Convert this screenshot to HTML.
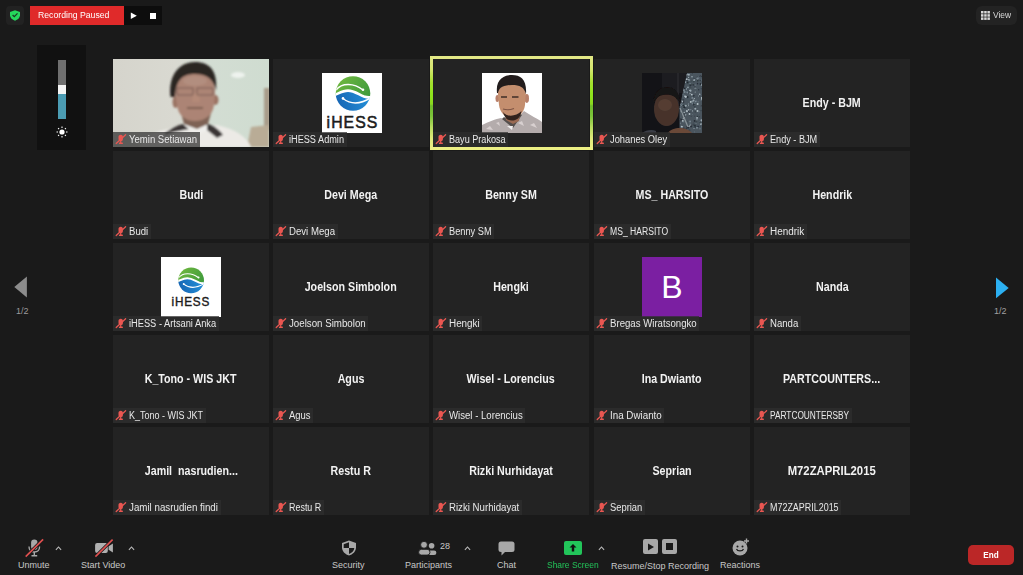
<!DOCTYPE html>
<html><head><meta charset="utf-8">
<style>
*{margin:0;padding:0;box-sizing:border-box}
html,body{width:1023px;height:575px;overflow:hidden;background:#1a1a1a;font-family:"Liberation Sans",sans-serif;color:#fff}
.abs{position:absolute}
.tile{position:absolute;width:156px;height:88px;background:#232323;overflow:hidden}
.vid{position:absolute;left:0;top:0}
.sq{position:absolute;left:48px;top:14px;width:60px;height:60px;overflow:hidden}
.bsq{background:#7b1fa2;}
.bsq span{position:absolute;left:0;top:0;width:60px;height:60px;line-height:60px;text-align:center;font-size:32px;color:#fff}
.cn{position:absolute;left:0;top:0;width:156px;height:88px;display:flex;align-items:center;justify-content:center}
.cn span{font-weight:bold;font-size:12px;white-space:nowrap;transform:scaleX(0.89);display:inline-block;color:#f2f2f2}
.lab{position:absolute;left:0;bottom:0;height:15px;font-size:10px;line-height:15px;background:rgba(46,46,46,0.73);white-space:nowrap}
.lab .mic{position:absolute;left:0;top:0}
.lt{position:absolute;left:16px;top:0;color:#e8e8e8;transform-origin:left center;transform:scaleX(0.95)}
.tb{position:absolute;font-size:9px;color:#c8c8c8;white-space:nowrap;text-align:center;margin-top:1px}
</style></head><body>
<!-- top bar -->
<div class="abs" style="left:6px;top:6px;width:18px;height:19px;background:#222;border-radius:4px"></div>
<svg class="abs" style="left:9px;top:9px" width="12" height="12" viewBox="0 0 12 12"><path d="M6 1.2 L11 2.9 L11 6.3 C11 9 8.6 10.9 6 11.7 C3.4 10.9 1 9 1 6.3 L1 2.9Z" fill="#25d85c"/><path d="M3.6 6 L5.3 7.6 L8.5 4.4" stroke="#1a3a22" stroke-width="1.3" fill="none"/></svg>
<div class="abs" style="left:30px;top:6px;width:94px;height:19px;background:#e02a2a"></div>
<div class="abs" style="left:38px;top:5px;height:19px;line-height:19px;font-size:9.6px;color:#fff;white-space:nowrap;transform-origin:left center;transform:scaleX(0.905)">Recording Paused</div>
<div class="abs" style="left:124px;top:6px;width:38px;height:19px;background:#0d0d0d"></div>
<svg class="abs" style="left:130px;top:12px" width="8" height="8" viewBox="0 0 8 8"><path d="M0.8 0.5 L6.8 3.7 L0.8 7Z" fill="#fff"/></svg>
<div class="abs" style="left:150px;top:13px;width:6px;height:6px;background:#fff"></div>

<div class="abs" style="left:976px;top:6px;width:41px;height:19px;background:#232323;border-radius:6px"></div>
<svg class="abs" style="left:981px;top:11px" width="9" height="9" viewBox="0 0 9 9" fill="#d8d8d8"><rect x="0" y="0" width="2.5" height="2.5"/><rect x="3.2" y="0" width="2.5" height="2.5"/><rect x="6.4" y="0" width="2.5" height="2.5"/><rect x="0" y="3.2" width="2.5" height="2.5"/><rect x="3.2" y="3.2" width="2.5" height="2.5"/><rect x="6.4" y="3.2" width="2.5" height="2.5"/><rect x="0" y="6.4" width="2.5" height="2.5"/><rect x="3.2" y="6.4" width="2.5" height="2.5"/><rect x="6.4" y="6.4" width="2.5" height="2.5"/></svg>
<div class="abs" style="left:993px;top:5px;line-height:19px;font-size:9.6px;color:#d8d8d8;transform-origin:left center;transform:scaleX(0.88)">View</div>

<!-- left volume panel -->
<div class="abs" style="left:37px;top:45px;width:49px;height:105px;background:#111"></div>
<div class="abs" style="left:58px;top:60px;width:8px;height:25px;background:#707070"></div>
<div class="abs" style="left:58px;top:85px;width:8px;height:9px;background:#f5f5f5"></div>
<div class="abs" style="left:58px;top:94px;width:8px;height:25px;background:#4b9cb3"></div>
<svg class="abs" style="left:56px;top:126px" width="12" height="12" viewBox="0 0 12 12"><circle cx="6" cy="6" r="2.6" fill="#fff"/><g stroke="#fff" stroke-width="1.1"><path d="M6 0.5V2M6 10V11.5M0.5 6H2M10 6H11.5M2.1 2.1L3.1 3.1M8.9 8.9L9.9 9.9M2.1 9.9L3.1 8.9M8.9 3.1L9.9 2.1"/></g></svg>

<!-- arrows -->
<svg class="abs" style="left:14px;top:276px" width="13" height="22" viewBox="0 0 13 22"><path d="M0.3 11 L12.9 0.5 L12.9 21.6Z" fill="#8c8c8c"/></svg>
<div class="abs" style="left:16px;top:306px;font-size:9px;color:#9a9a9a">1/2</div>
<svg class="abs" style="left:996px;top:277px" width="13" height="22" viewBox="0 0 13 22"><path d="M0 0.4 L12.7 10.9 L0 21.3Z" fill="#2cb0f2"/></svg>
<div class="abs" style="left:994px;top:306px;font-size:9px;color:#a0a0a0">1/2</div>

<!-- highlight border -->
<div class="abs" style="left:430px;top:56px;width:163px;height:3px;background:#e2e886"></div>
<div class="abs" style="left:430px;top:147px;width:163px;height:3px;background:#ecef84"></div>
<div class="abs" style="left:430px;top:56px;width:3px;height:94px;background:linear-gradient(#e2e886 0%,#d4e66e 14%,#a6e030 28%,#8fe41c 40%,#8ad81e 51%,#6fbb2c 53%,#7cc43a 64%,#b8dc60 76%,#e0ea7c 88%,#ecef84 100%)"></div>
<div class="abs" style="left:590px;top:56px;width:3px;height:94px;background:linear-gradient(#e2e886 0%,#d4e66e 14%,#a6e030 28%,#8fe41c 40%,#8ad81e 51%,#6fbb2c 53%,#7cc43a 64%,#b8dc60 76%,#e0ea7c 88%,#ecef84 100%)"></div>

<div class="tile" style="left:113px;top:59px"><svg class="vid" width="156" height="88" viewBox="0 0 156 88">
<defs>
<linearGradient id="vbg" x1="0" y1="0" x2="1" y2="0">
<stop offset="0" stop-color="#d5d4cc"/><stop offset="0.4" stop-color="#d9d9d1"/><stop offset="0.62" stop-color="#d3ddd3"/><stop offset="1" stop-color="#cfdcd0"/>
</linearGradient>
<filter id="vbl" x="-10%" y="-10%" width="120%" height="120%"><feGaussianBlur stdDeviation="1.1"/></filter>
</defs>
<rect width="156" height="88" fill="url(#vbg)"/>
<g filter="url(#vbl)">
<rect x="151" y="29" width="6" height="42" fill="#a89c8a"/>
<path d="M134 88 L138 68 L156 66 L156 88Z" fill="#b9ac96"/>
<ellipse cx="125" cy="16" rx="7" ry="3" fill="#eef3ee"/>
<path d="M26 88 C30 78 42 72 56 70 L104 66 C122 70 134 78 138 88Z" fill="#eceae6"/>
<path d="M52 74 C58 70 64 66 70 65 L76 70 L66 72 C60 73 56 74 52 76Z" fill="#3a3636"/><path d="M94 65 C100 66 106 70 110 76 L104 79 L94 71Z" fill="#3a3636"/><path d="M70 65 L84 70 L94 65 L94 71 L84 76 L76 70Z" fill="#f0efec"/>
<path d="M68 54 L98 54 L95 65 L84 70 L71 65Z" fill="#7e6254"/>
<ellipse cx="62.5" cy="43" rx="3" ry="6" fill="#9a7262"/>
<ellipse cx="102.5" cy="41" rx="3" ry="5" fill="#9a7262"/>
<path d="M62 34 C62 20 70 13 82 13 C95 13 102 20 102 34 L101 46 C100 56 92 62 82 62 C72 62 65 56 64 46Z" fill="#ac8474"/>
<path d="M80 34 L86 34 L87 43 L79 43Z" fill="#b48a78"/>
<path d="M57.5 38 C55 14 68 3 82 3 C97 3 105 12 103 32 C101 22 96 15 82 15 C70 15 63 20 62 38Z" fill="#2a2524"/><ellipse cx="82" cy="22" rx="12" ry="5" fill="#b8978a" opacity="0.5"/>
<path d="M64 29 H80 V36 H64Z M84 29 H100 V36 H84Z" fill="none" stroke="#5a4844" stroke-width="1" opacity="0.6"/>
<path d="M74 49 H90" stroke="#6e5046" stroke-width="1.5"/>
</g>
</svg>
<div class="lab" style="width:86.6px"><svg class="mic" width="16" height="15" viewBox="0 0 16 15"><g fill="#ea5752"><path d="M7.7 2.8 C9.2 2.8 9.9 3.8 9.9 5 L9.9 7.3 C9.9 8.6 8.9 9.3 7.7 9.3 C6.5 9.3 5.5 8.6 5.5 7.3 L5.5 5 C5.5 3.8 6.2 2.8 7.7 2.8Z"/><rect x="7.1" y="9" width="1.2" height="2"/><rect x="5.9" y="10.6" width="4" height="1.5" rx="0.6"/></g><path d="M3.2 11.5 L12.6 2.7" stroke="#ea5752" stroke-width="1.25" stroke-linecap="round"/></svg><span class="lt" style="transform:scaleX(0.955)">Yemin Setiawan</span></div></div>
<div class="tile" style="left:273px;top:59px"><div class="sq" style="left:49px"><svg width="60" height="60" viewBox="0 0 60 60">
<defs>
<linearGradient id="lg1" x1="0" y1="0" x2="1" y2="0.3"><stop offset="0" stop-color="#86c440"/><stop offset="1" stop-color="#3d9a3c"/></linearGradient>
<linearGradient id="lg2" x1="0" y1="0" x2="1" y2="-0.2"><stop offset="0" stop-color="#1258a8"/><stop offset="1" stop-color="#2aa4ea"/></linearGradient>
<clipPath id="lc"><circle cx="31" cy="20.5" r="17.3"/></clipPath>
</defs>
<rect width="60" height="60" fill="#fff"/>
<g clip-path="url(#lc)">
<path d="M0 0 H60 V22 C54 23 48 25 42 23 C36 21 32 18.5 26 18.5 C20 18.5 17 21 13 22.5 L0 24Z" fill="url(#lg1)"/>
<path d="M0 24 L13 22.5 C17 21 20 18.5 26 18.5 C32 18.5 36 21 42 23 C48 25 54 23 60 22 V60 H0Z" fill="url(#lg2)"/>
<path d="M10 23 C16 21 20 17.6 26 17.6 C32 17.6 36 21 42 23.5 C46 25 50 24.5 54 23" stroke="#fff" stroke-width="2.6" fill="none"/>
<path d="M14 17 C20 9.5 32 10 41 17" stroke="#fff" stroke-width="1.4" fill="none"/>
<path d="M21 25.5 C28 31 38 32 50 24" stroke="#fff" stroke-width="1.4" fill="none"/>
</g>
<circle cx="41" cy="16.8" r="1.3" fill="#fff"/>
<circle cx="21" cy="25.4" r="1.3" fill="#fff"/>
<text x="4.6" y="54.6" font-family="Liberation Sans" font-size="16.4" fill="#1c1c1c" stroke="#1c1c1c" stroke-width="0.55" letter-spacing="1.1" textLength="51.8" lengthAdjust="spacingAndGlyphs">iHESS</text>
</svg>
</div><div class="lab" style="width:73.5px"><svg class="mic" width="16" height="15" viewBox="0 0 16 15"><g fill="#ea5752"><path d="M7.7 2.8 C9.2 2.8 9.9 3.8 9.9 5 L9.9 7.3 C9.9 8.6 8.9 9.3 7.7 9.3 C6.5 9.3 5.5 8.6 5.5 7.3 L5.5 5 C5.5 3.8 6.2 2.8 7.7 2.8Z"/><rect x="7.1" y="9" width="1.2" height="2"/><rect x="5.9" y="10.6" width="4" height="1.5" rx="0.6"/></g><path d="M3.2 11.5 L12.6 2.7" stroke="#ea5752" stroke-width="1.25" stroke-linecap="round"/></svg><span class="lt" style="transform:scaleX(0.916)">iHESS Admin</span></div></div>
<div class="tile" style="left:433px;top:59px"><div class="sq" style="left:49px"><svg width="60" height="60" viewBox="0 0 60 60">
<defs><filter id="bbl" x="-5%" y="-5%" width="110%" height="110%"><feGaussianBlur stdDeviation="0.7"/></filter></defs>
<rect width="60" height="60" fill="#fff"/>
<g filter="url(#bbl)">
<path d="M0 60 L0 52 C6 49 14 46 19 45 L24 47 L36 44 L42 38 C48 42 56 46 60 49 L60 60Z" fill="#b4acac"/>
<path d="M4 56 L8 53 L11 57Z M48 52 L52 50 L55 55Z M36 50 L40 48 L42 53Z M14 50 L17 49 L18 53Z" fill="#d8d0d0"/>
<path d="M20 46 L31 55 L40 42 L38 41 L31 50 L22 44Z" fill="#55504e"/>
<path d="M25 53 L30 57 L31 53Z" fill="#f0eeee"/>
<path d="M23 40 L38 40 L37 48 L31 51 L24 47Z" fill="#9a6a52"/>
<ellipse cx="15.3" cy="25.5" rx="1.8" ry="3.6" fill="#b8806a"/>
<ellipse cx="44.8" cy="25.5" rx="2.2" ry="4.4" fill="#b8806a"/>
<path d="M15.8 20 C15.8 13 22 11.5 30 11.5 C38 11.5 43.8 13 43.8 21 L43 32 C42 40 36 45.5 30 45.5 C24 45.5 18 40 17 32Z" fill="#c48e6e"/>
<path d="M15 20 C13.5 7 21 2 30 2 C39 2 45 7 44 21 C42 14 38 12 30 12 C22 12 17 14 16 20Z" fill="#221e1e"/>
<path d="M19 24 H25 M30 24 H36.5" stroke="#3e2e28" stroke-width="1.5"/>
<path d="M21 36 C24 37 28 37 32 35.5" stroke="#7e5444" stroke-width="1.2" fill="none"/>
<path d="M21 39 C24 44 34 44 39.5 38 C38.5 45 34.5 47.5 30 47.5 C25.5 47.5 22.5 45 21 39Z" fill="#30241f"/>
</g>
</svg>
</div><div class="lab" style="width:75.1px"><svg class="mic" width="16" height="15" viewBox="0 0 16 15"><g fill="#ea5752"><path d="M7.7 2.8 C9.2 2.8 9.9 3.8 9.9 5 L9.9 7.3 C9.9 8.6 8.9 9.3 7.7 9.3 C6.5 9.3 5.5 8.6 5.5 7.3 L5.5 5 C5.5 3.8 6.2 2.8 7.7 2.8Z"/><rect x="7.1" y="9" width="1.2" height="2"/><rect x="5.9" y="10.6" width="4" height="1.5" rx="0.6"/></g><path d="M3.2 11.5 L12.6 2.7" stroke="#ea5752" stroke-width="1.25" stroke-linecap="round"/></svg><span class="lt" style="transform:scaleX(0.909)">Bayu Prakosa</span></div></div>
<div class="tile" style="left:594px;top:59px"><div class="sq" style="left:48px"><svg width="60" height="60" viewBox="0 0 60 60">
<defs><filter id="jbl" x="-5%" y="-5%" width="110%" height="110%"><feGaussianBlur stdDeviation="0.5"/></filter>
<clipPath id="jcl"><path d="M45 0 L60 0 L60 60 L37.5 60 L37.5 35Z"/></clipPath></defs>
<rect width="60" height="60" fill="#131317"/>
<rect x="20" y="0" width="24" height="20" fill="#1c1c20"/>
<path d="M45 0 L60 0 L60 60 L37.5 60 L37.5 35Z" fill="#4a555e"/>
<g filter="url(#jbl)">
<g clip-path="url(#jcl)"><circle cx="43.8" cy="9.1" r="0.9" fill="#9aa8b0"/>
<circle cx="55.7" cy="5.6" r="0.8" fill="#b4c0c6"/>
<circle cx="46.0" cy="14.4" r="0.8" fill="#9aa8b0"/>
<circle cx="55.8" cy="7.4" r="0.6" fill="#222a32"/>
<circle cx="50.0" cy="3.7" r="0.8" fill="#9aa8b0"/>
<circle cx="59.4" cy="2.8" r="1.0" fill="#2a323a"/>
<circle cx="46.1" cy="32.4" r="0.8" fill="#b4c0c6"/>
<circle cx="55.6" cy="10.8" r="0.8" fill="#222a32"/>
<circle cx="53.1" cy="33.9" r="0.8" fill="#3a444c"/>
<circle cx="52.3" cy="25.7" r="0.6" fill="#b4c0c6"/>
<circle cx="58.2" cy="21.7" r="0.6" fill="#7a8892"/>
<circle cx="52.8" cy="14.6" r="0.8" fill="#b4c0c6"/>
<circle cx="47.9" cy="20.6" r="0.7" fill="#b4c0c6"/>
<circle cx="59.5" cy="7.1" r="0.7" fill="#5a6872"/>
<circle cx="44.2" cy="56.0" r="0.7" fill="#222a32"/>
<circle cx="37.9" cy="33.5" r="1.0" fill="#5a6872"/>
<circle cx="43.5" cy="41.7" r="0.8" fill="#b4c0c6"/>
<circle cx="55.1" cy="4.1" r="0.5" fill="#2a323a"/>
<circle cx="47.4" cy="39.8" r="0.4" fill="#222a32"/>
<circle cx="43.4" cy="34.7" r="0.9" fill="#3a444c"/>
<circle cx="42.8" cy="23.1" r="0.9" fill="#9aa8b0"/>
<circle cx="58.6" cy="21.3" r="0.8" fill="#3a444c"/>
<circle cx="45.4" cy="52.3" r="0.5" fill="#3a444c"/>
<circle cx="45.6" cy="16.7" r="0.5" fill="#3a444c"/>
<circle cx="56.7" cy="16.7" r="0.7" fill="#2a323a"/>
<circle cx="52.4" cy="22.8" r="0.6" fill="#9aa8b0"/>
<circle cx="41.6" cy="29.1" r="0.8" fill="#2a323a"/>
<circle cx="48.8" cy="36.6" r="0.6" fill="#7a8892"/>
<circle cx="52.6" cy="30.9" r="0.8" fill="#222a32"/>
<circle cx="53.8" cy="27.4" r="1.0" fill="#5a6872"/>
<circle cx="52.3" cy="33.6" r="0.7" fill="#3a444c"/>
<circle cx="38.5" cy="38.1" r="0.4" fill="#9aa8b0"/>
<circle cx="59.6" cy="26.4" r="0.5" fill="#b4c0c6"/>
<circle cx="44.7" cy="1.5" r="1.0" fill="#b4c0c6"/>
<circle cx="45.0" cy="38.1" r="1.1" fill="#b4c0c6"/>
<circle cx="44.7" cy="7.4" r="1.0" fill="#3a444c"/>
<circle cx="47.5" cy="18.7" r="0.5" fill="#222a32"/>
<circle cx="44.2" cy="15.9" r="1.0" fill="#7a8892"/>
<circle cx="48.4" cy="12.3" r="1.1" fill="#2a323a"/>
<circle cx="39.5" cy="32.6" r="0.4" fill="#b4c0c6"/>
<circle cx="43.2" cy="38.6" r="0.5" fill="#5a6872"/>
<circle cx="42.3" cy="22.0" r="0.5" fill="#5a6872"/>
<circle cx="41.3" cy="32.5" r="0.8" fill="#222a32"/>
<circle cx="41.4" cy="48.7" r="1.1" fill="#5a6872"/>
<circle cx="45.6" cy="48.2" r="0.5" fill="#3a444c"/>
<circle cx="42.2" cy="41.6" r="1.1" fill="#3a444c"/>
<circle cx="55.4" cy="43.4" r="0.6" fill="#2a323a"/>
<circle cx="47.3" cy="20.3" r="0.7" fill="#b4c0c6"/>
<circle cx="56.2" cy="28.8" r="0.9" fill="#5a6872"/>
<circle cx="51.4" cy="50.1" r="0.5" fill="#3a444c"/>
<circle cx="54.8" cy="45.0" r="0.7" fill="#7a8892"/>
<circle cx="46.4" cy="38.2" r="0.5" fill="#222a32"/>
<circle cx="45.5" cy="24.1" r="1.1" fill="#222a32"/>
<circle cx="39.8" cy="59.6" r="0.4" fill="#b4c0c6"/>
<circle cx="57.7" cy="48.4" r="0.5" fill="#5a6872"/>
<circle cx="50.3" cy="28.5" r="1.1" fill="#7a8892"/>
<circle cx="49.2" cy="7.9" r="0.4" fill="#222a32"/>
<circle cx="51.6" cy="31.6" r="1.1" fill="#3a444c"/>
<circle cx="59.7" cy="11.7" r="1.0" fill="#9aa8b0"/>
<circle cx="42.0" cy="17.6" r="0.6" fill="#b4c0c6"/>
<circle cx="43.8" cy="32.7" r="1.0" fill="#9aa8b0"/>
<circle cx="57.8" cy="21.2" r="0.7" fill="#b4c0c6"/>
<circle cx="55.6" cy="31.0" r="1.0" fill="#b4c0c6"/>
<circle cx="48.3" cy="52.4" r="0.9" fill="#b4c0c6"/>
<circle cx="40.1" cy="28.4" r="0.9" fill="#b4c0c6"/>
<circle cx="48.7" cy="28.9" r="0.9" fill="#b4c0c6"/>
<circle cx="46.9" cy="1.7" r="1.0" fill="#9aa8b0"/>
<circle cx="46.6" cy="36.8" r="0.8" fill="#b4c0c6"/>
<circle cx="48.2" cy="48.4" r="0.8" fill="#7a8892"/>
<circle cx="52.8" cy="52.6" r="1.1" fill="#2a323a"/>
<circle cx="58.1" cy="53.6" r="0.5" fill="#3a444c"/>
<circle cx="46.6" cy="4.4" r="0.6" fill="#9aa8b0"/>
<circle cx="38.9" cy="46.6" r="1.1" fill="#222a32"/>
<circle cx="51.8" cy="8.6" r="1.0" fill="#3a444c"/>
<circle cx="41.3" cy="57.2" r="0.7" fill="#3a444c"/>
<circle cx="39.9" cy="40.1" r="0.6" fill="#222a32"/>
<circle cx="46.4" cy="30.9" r="0.6" fill="#7a8892"/>
<circle cx="44.6" cy="5.5" r="0.7" fill="#2a323a"/>
<circle cx="49.3" cy="26.4" r="0.4" fill="#2a323a"/>
<circle cx="48.4" cy="17.7" r="1.1" fill="#9aa8b0"/>
<circle cx="59.6" cy="47.3" r="1.1" fill="#9aa8b0"/>
<circle cx="57.7" cy="10.9" r="0.9" fill="#5a6872"/>
<circle cx="46.1" cy="54.7" r="1.0" fill="#2a323a"/>
<circle cx="45.7" cy="32.2" r="0.8" fill="#3a444c"/>
<circle cx="52.8" cy="5.4" r="0.4" fill="#222a32"/>
<circle cx="40.4" cy="53.7" r="0.6" fill="#9aa8b0"/>
<circle cx="51.2" cy="48.1" r="0.5" fill="#5a6872"/>
<circle cx="59.9" cy="25.1" r="1.0" fill="#b4c0c6"/>
<circle cx="39.1" cy="31.6" r="0.6" fill="#9aa8b0"/>
<circle cx="59.3" cy="15.7" r="0.5" fill="#2a323a"/>
<circle cx="51.1" cy="31.9" r="0.5" fill="#3a444c"/>
<circle cx="48.0" cy="10.7" r="0.6" fill="#9aa8b0"/>
<circle cx="59.9" cy="2.2" r="0.4" fill="#b4c0c6"/>
<circle cx="49.2" cy="11.4" r="0.7" fill="#3a444c"/>
<circle cx="38.6" cy="49.1" r="0.7" fill="#3a444c"/>
<circle cx="49.1" cy="53.3" r="1.1" fill="#2a323a"/>
<circle cx="52.5" cy="58.9" r="0.6" fill="#5a6872"/>
<circle cx="57.2" cy="43.7" r="0.5" fill="#2a323a"/>
<circle cx="59.6" cy="50.2" r="0.4" fill="#222a32"/>
<circle cx="53.8" cy="15.3" r="0.5" fill="#9aa8b0"/>
<circle cx="52.0" cy="22.9" r="0.8" fill="#2a323a"/>
<circle cx="50.4" cy="41.6" r="0.4" fill="#7a8892"/>
<circle cx="39.8" cy="26.7" r="0.6" fill="#2a323a"/>
<circle cx="59.3" cy="32.8" r="0.6" fill="#2a323a"/>
<circle cx="44.0" cy="5.0" r="0.6" fill="#222a32"/>
<circle cx="40.8" cy="30.3" r="0.4" fill="#2a323a"/>
<circle cx="55.6" cy="8.6" r="0.8" fill="#3a444c"/>
<circle cx="41.6" cy="35.1" r="0.8" fill="#5a6872"/>
<circle cx="39.7" cy="53.6" r="0.9" fill="#b4c0c6"/>
<circle cx="45.3" cy="19.6" r="1.1" fill="#7a8892"/>
<circle cx="42.8" cy="37.1" r="0.5" fill="#5a6872"/>
<circle cx="56.0" cy="53.5" r="0.8" fill="#222a32"/>
<circle cx="52.8" cy="30.3" r="1.0" fill="#5a6872"/>
<circle cx="48.1" cy="50.1" r="1.0" fill="#5a6872"/>
<circle cx="52.5" cy="47.9" r="0.9" fill="#222a32"/>
<circle cx="51.4" cy="5.1" r="0.4" fill="#222a32"/>
<circle cx="44.7" cy="6.3" r="1.0" fill="#b4c0c6"/>
<circle cx="48.8" cy="14.7" r="0.6" fill="#3a444c"/>
<circle cx="55.1" cy="44.9" r="0.8" fill="#b4c0c6"/>
<circle cx="53.9" cy="28.4" r="1.0" fill="#5a6872"/>
<circle cx="42.4" cy="43.8" r="0.5" fill="#222a32"/>
<circle cx="51.6" cy="27.6" r="1.0" fill="#9aa8b0"/>
<circle cx="47.5" cy="41.0" r="0.9" fill="#b4c0c6"/>
<circle cx="51.2" cy="11.9" r="0.8" fill="#2a323a"/>
<circle cx="42.1" cy="44.6" r="0.6" fill="#b4c0c6"/>
<circle cx="39.2" cy="28.9" r="0.7" fill="#222a32"/>
<circle cx="47.8" cy="42.5" r="0.6" fill="#3a444c"/>
<circle cx="47.2" cy="7.1" r="1.0" fill="#7a8892"/>
<circle cx="47.4" cy="17.4" r="0.5" fill="#b4c0c6"/>
<circle cx="59.2" cy="27.0" r="0.6" fill="#7a8892"/>
<circle cx="58.0" cy="55.8" r="0.5" fill="#9aa8b0"/>
<circle cx="39.4" cy="31.4" r="1.1" fill="#7a8892"/>
<circle cx="50.5" cy="37.9" r="0.6" fill="#9aa8b0"/>
<circle cx="52.9" cy="13.9" r="1.0" fill="#3a444c"/>
<circle cx="45.5" cy="9.5" r="1.1" fill="#222a32"/>
<circle cx="46.8" cy="18.1" r="0.5" fill="#2a323a"/>
<circle cx="45.0" cy="7.3" r="0.6" fill="#2a323a"/>
<circle cx="54.0" cy="50.3" r="0.5" fill="#7a8892"/>
<circle cx="53.1" cy="54.1" r="0.6" fill="#2a323a"/>
<circle cx="56.9" cy="4.6" r="1.0" fill="#5a6872"/>
<circle cx="38.4" cy="50.1" r="0.6" fill="#7a8892"/>
<circle cx="42.0" cy="15.9" r="0.8" fill="#7a8892"/>
<circle cx="54.6" cy="47.1" r="0.7" fill="#9aa8b0"/>
<circle cx="55.5" cy="37.9" r="1.0" fill="#b4c0c6"/>
<circle cx="49.2" cy="43.2" r="0.4" fill="#222a32"/>
<circle cx="45.9" cy="36.9" r="0.5" fill="#5a6872"/>
<circle cx="58.2" cy="7.6" r="0.7" fill="#2a323a"/>
<circle cx="42.8" cy="15.3" r="0.9" fill="#222a32"/>
<circle cx="42.2" cy="39.4" r="0.6" fill="#b4c0c6"/>
<circle cx="52.1" cy="7.2" r="0.9" fill="#9aa8b0"/>
<circle cx="41.0" cy="54.4" r="0.7" fill="#7a8892"/>
<circle cx="46.9" cy="20.0" r="0.9" fill="#3a444c"/>
<circle cx="42.2" cy="34.2" r="1.0" fill="#222a32"/>
<circle cx="56.9" cy="23.0" r="0.9" fill="#7a8892"/>
<circle cx="45.0" cy="20.3" r="0.4" fill="#2a323a"/>
<circle cx="49.8" cy="21.6" r="0.9" fill="#b4c0c6"/>
<circle cx="51.1" cy="51.8" r="0.6" fill="#2a323a"/>
<circle cx="57.5" cy="23.1" r="0.9" fill="#3a444c"/>
<circle cx="58.9" cy="50.9" r="1.0" fill="#9aa8b0"/>
<circle cx="54.3" cy="48.3" r="1.1" fill="#3a444c"/>
<circle cx="58.2" cy="49.5" r="1.0" fill="#3a444c"/>
<circle cx="39.7" cy="31.3" r="0.9" fill="#5a6872"/>
<circle cx="53.3" cy="38.8" r="0.9" fill="#3a444c"/>
<circle cx="38.0" cy="46.6" r="0.4" fill="#7a8892"/>
<circle cx="41.6" cy="55.2" r="0.9" fill="#2a323a"/>
<circle cx="59.1" cy="37.6" r="0.8" fill="#3a444c"/>
<circle cx="52.8" cy="6.7" r="0.4" fill="#b4c0c6"/>
<circle cx="58.6" cy="11.5" r="0.6" fill="#5a6872"/>
<circle cx="50.4" cy="0.6" r="0.6" fill="#3a444c"/>
<circle cx="42.7" cy="19.0" r="1.0" fill="#7a8892"/>
<circle cx="47.4" cy="14.1" r="0.6" fill="#3a444c"/>
<circle cx="52.9" cy="18.4" r="0.4" fill="#3a444c"/>
<circle cx="57.2" cy="38.8" r="0.5" fill="#7a8892"/>
<circle cx="52.0" cy="55.5" r="0.6" fill="#9aa8b0"/>
<circle cx="52.7" cy="43.1" r="0.7" fill="#3a444c"/>
<circle cx="40.8" cy="47.8" r="0.9" fill="#b4c0c6"/>
<circle cx="40.8" cy="46.0" r="0.5" fill="#3a444c"/>
<circle cx="41.3" cy="45.6" r="0.6" fill="#b4c0c6"/>
<circle cx="47.9" cy="11.2" r="0.6" fill="#3a444c"/>
<circle cx="57.8" cy="3.4" r="0.8" fill="#3a444c"/>
<circle cx="50.3" cy="24.9" r="0.9" fill="#7a8892"/>
<circle cx="45.4" cy="53.9" r="1.0" fill="#222a32"/>
<circle cx="51.7" cy="31.5" r="0.7" fill="#2a323a"/>
<circle cx="51.9" cy="22.7" r="0.7" fill="#2a323a"/>
<circle cx="46.6" cy="6.5" r="0.5" fill="#9aa8b0"/>
<circle cx="44.4" cy="57.3" r="0.5" fill="#5a6872"/>
<circle cx="41.0" cy="21.4" r="1.0" fill="#5a6872"/>
<circle cx="55.3" cy="5.3" r="0.9" fill="#7a8892"/>
<circle cx="44.9" cy="55.2" r="0.5" fill="#2a323a"/>
<circle cx="53.7" cy="28.5" r="0.8" fill="#7a8892"/>
<circle cx="55.5" cy="46.0" r="0.4" fill="#9aa8b0"/>
<circle cx="47.1" cy="48.2" r="0.4" fill="#7a8892"/>
<circle cx="53.9" cy="53.9" r="0.6" fill="#2a323a"/>
<circle cx="44.0" cy="57.2" r="0.4" fill="#222a32"/>
<circle cx="53.2" cy="19.0" r="0.6" fill="#9aa8b0"/>
<circle cx="53.3" cy="35.7" r="1.0" fill="#9aa8b0"/>
<circle cx="47.4" cy="57.4" r="1.1" fill="#3a444c"/>
<circle cx="55.0" cy="54.8" r="1.0" fill="#7a8892"/>
<circle cx="58.3" cy="11.0" r="1.0" fill="#222a32"/>
<circle cx="43.3" cy="41.5" r="0.5" fill="#7a8892"/>
<circle cx="43.9" cy="19.2" r="0.7" fill="#5a6872"/>
<circle cx="50.3" cy="30.7" r="0.7" fill="#7a8892"/>
<circle cx="43.8" cy="58.8" r="1.0" fill="#9aa8b0"/>
<circle cx="53.0" cy="26.8" r="0.6" fill="#3a444c"/>
<circle cx="47.1" cy="53.5" r="0.6" fill="#b4c0c6"/>
<circle cx="56.3" cy="39.9" r="0.5" fill="#5a6872"/>
<circle cx="43.1" cy="16.8" r="0.6" fill="#2a323a"/>
<circle cx="53.7" cy="12.0" r="0.6" fill="#7a8892"/>
<circle cx="41.7" cy="16.9" r="1.0" fill="#7a8892"/>
<circle cx="43.8" cy="23.8" r="1.1" fill="#b4c0c6"/>
<circle cx="48.6" cy="39.0" r="0.5" fill="#3a444c"/>
<circle cx="59.8" cy="6.1" r="0.7" fill="#5a6872"/>
<circle cx="41.5" cy="26.9" r="0.7" fill="#2a323a"/></g>
<path d="M38 35 L46 54" stroke="#8a949a" stroke-width="1.2"/>
<path d="M35 0 L37 0 L37 32 L35 32Z" fill="#26262a"/>
<ellipse cx="24.5" cy="36" rx="12.5" ry="17" fill="#46332c"/>
<ellipse cx="23" cy="32" rx="7" ry="6" fill="#5a4236" opacity="0.7"/>
<path d="M11.5 30 C11 19 18 14 25 14 C33 14 38 20 37.5 29 C33 22 27 21 21 22 C16 23 13 26 12 30Z" fill="#161212"/>
<path d="M26 60 C30 54 44 53 50 60Z" fill="#6a4838"/>
<path d="M0 60 C4 57 10 56 14 58 L14 60Z" fill="#3a3e46"/>
</g>
</svg></div><div class="lab" style="width:75.6px"><svg class="mic" width="16" height="15" viewBox="0 0 16 15"><g fill="#ea5752"><path d="M7.7 2.8 C9.2 2.8 9.9 3.8 9.9 5 L9.9 7.3 C9.9 8.6 8.9 9.3 7.7 9.3 C6.5 9.3 5.5 8.6 5.5 7.3 L5.5 5 C5.5 3.8 6.2 2.8 7.7 2.8Z"/><rect x="7.1" y="9" width="1.2" height="2"/><rect x="5.9" y="10.6" width="4" height="1.5" rx="0.6"/></g><path d="M3.2 11.5 L12.6 2.7" stroke="#ea5752" stroke-width="1.25" stroke-linecap="round"/></svg><span class="lt" style="transform:scaleX(0.933)">Johanes Oley</span></div></div>
<div class="tile" style="left:754px;top:59px"><div class="cn"><span>Endy - BJM</span></div><div class="lab" style="width:65.7px"><svg class="mic" width="16" height="15" viewBox="0 0 16 15"><g fill="#ea5752"><path d="M7.7 2.8 C9.2 2.8 9.9 3.8 9.9 5 L9.9 7.3 C9.9 8.6 8.9 9.3 7.7 9.3 C6.5 9.3 5.5 8.6 5.5 7.3 L5.5 5 C5.5 3.8 6.2 2.8 7.7 2.8Z"/><rect x="7.1" y="9" width="1.2" height="2"/><rect x="5.9" y="10.6" width="4" height="1.5" rx="0.6"/></g><path d="M3.2 11.5 L12.6 2.7" stroke="#ea5752" stroke-width="1.25" stroke-linecap="round"/></svg><span class="lt" style="transform:scaleX(0.913)">Endy - BJM</span></div></div>
<div class="tile" style="left:113px;top:151px"><div class="cn"><span>Budi</span></div><div class="lab" style="width:37.6px"><svg class="mic" width="16" height="15" viewBox="0 0 16 15"><g fill="#ea5752"><path d="M7.7 2.8 C9.2 2.8 9.9 3.8 9.9 5 L9.9 7.3 C9.9 8.6 8.9 9.3 7.7 9.3 C6.5 9.3 5.5 8.6 5.5 7.3 L5.5 5 C5.5 3.8 6.2 2.8 7.7 2.8Z"/><rect x="7.1" y="9" width="1.2" height="2"/><rect x="5.9" y="10.6" width="4" height="1.5" rx="0.6"/></g><path d="M3.2 11.5 L12.6 2.7" stroke="#ea5752" stroke-width="1.25" stroke-linecap="round"/></svg><span class="lt" style="transform:scaleX(0.956)">Budi</span></div></div>
<div class="tile" style="left:273px;top:151px"><div class="cn"><span>Devi Mega</span></div><div class="lab" style="width:64.5px"><svg class="mic" width="16" height="15" viewBox="0 0 16 15"><g fill="#ea5752"><path d="M7.7 2.8 C9.2 2.8 9.9 3.8 9.9 5 L9.9 7.3 C9.9 8.6 8.9 9.3 7.7 9.3 C6.5 9.3 5.5 8.6 5.5 7.3 L5.5 5 C5.5 3.8 6.2 2.8 7.7 2.8Z"/><rect x="7.1" y="9" width="1.2" height="2"/><rect x="5.9" y="10.6" width="4" height="1.5" rx="0.6"/></g><path d="M3.2 11.5 L12.6 2.7" stroke="#ea5752" stroke-width="1.25" stroke-linecap="round"/></svg><span class="lt" style="transform:scaleX(0.962)">Devi Mega</span></div></div>
<div class="tile" style="left:433px;top:151px"><div class="cn"><span>Benny SM</span></div><div class="lab" style="width:61.1px"><svg class="mic" width="16" height="15" viewBox="0 0 16 15"><g fill="#ea5752"><path d="M7.7 2.8 C9.2 2.8 9.9 3.8 9.9 5 L9.9 7.3 C9.9 8.6 8.9 9.3 7.7 9.3 C6.5 9.3 5.5 8.6 5.5 7.3 L5.5 5 C5.5 3.8 6.2 2.8 7.7 2.8Z"/><rect x="7.1" y="9" width="1.2" height="2"/><rect x="5.9" y="10.6" width="4" height="1.5" rx="0.6"/></g><path d="M3.2 11.5 L12.6 2.7" stroke="#ea5752" stroke-width="1.25" stroke-linecap="round"/></svg><span class="lt" style="transform:scaleX(0.924)">Benny SM</span></div></div>
<div class="tile" style="left:594px;top:151px"><div class="cn"><span>MS_ HARSITO</span></div><div class="lab" style="width:76.6px"><svg class="mic" width="16" height="15" viewBox="0 0 16 15"><g fill="#ea5752"><path d="M7.7 2.8 C9.2 2.8 9.9 3.8 9.9 5 L9.9 7.3 C9.9 8.6 8.9 9.3 7.7 9.3 C6.5 9.3 5.5 8.6 5.5 7.3 L5.5 5 C5.5 3.8 6.2 2.8 7.7 2.8Z"/><rect x="7.1" y="9" width="1.2" height="2"/><rect x="5.9" y="10.6" width="4" height="1.5" rx="0.6"/></g><path d="M3.2 11.5 L12.6 2.7" stroke="#ea5752" stroke-width="1.25" stroke-linecap="round"/></svg><span class="lt" style="transform:scaleX(0.859)">MS_ HARSITO</span></div></div>
<div class="tile" style="left:754px;top:151px"><div class="cn"><span>Hendrik</span></div><div class="lab" style="width:52.6px"><svg class="mic" width="16" height="15" viewBox="0 0 16 15"><g fill="#ea5752"><path d="M7.7 2.8 C9.2 2.8 9.9 3.8 9.9 5 L9.9 7.3 C9.9 8.6 8.9 9.3 7.7 9.3 C6.5 9.3 5.5 8.6 5.5 7.3 L5.5 5 C5.5 3.8 6.2 2.8 7.7 2.8Z"/><rect x="7.1" y="9" width="1.2" height="2"/><rect x="5.9" y="10.6" width="4" height="1.5" rx="0.6"/></g><path d="M3.2 11.5 L12.6 2.7" stroke="#ea5752" stroke-width="1.25" stroke-linecap="round"/></svg><span class="lt" style="transform:scaleX(0.991)">Hendrik</span></div></div>
<div class="tile" style="left:113px;top:243px"><div class="sq" style="left:48px"><svg width="60" height="60" viewBox="0 0 60 60">
<defs>
<linearGradient id="lg1b" x1="0" y1="0" x2="1" y2="0.3"><stop offset="0" stop-color="#86c440"/><stop offset="1" stop-color="#3d9a3c"/></linearGradient>
<linearGradient id="lg2b" x1="0" y1="0" x2="1" y2="-0.2"><stop offset="0" stop-color="#1258a8"/><stop offset="1" stop-color="#2aa4ea"/></linearGradient>
<clipPath id="lcb"><circle cx="31" cy="20.5" r="17.3"/></clipPath>
</defs>
<rect width="60" height="60" fill="#fff"/><g transform="translate(7.1,8.1) scale(0.743)">
<g clip-path="url(#lcb)">
<path d="M0 0 H60 V22 C54 23 48 25 42 23 C36 21 32 18.5 26 18.5 C20 18.5 17 21 13 22.5 L0 24Z" fill="url(#lg1b)"/>
<path d="M0 24 L13 22.5 C17 21 20 18.5 26 18.5 C32 18.5 36 21 42 23 C48 25 54 23 60 22 V60 H0Z" fill="url(#lg2b)"/>
<path d="M10 23 C16 21 20 17.6 26 17.6 C32 17.6 36 21 42 23.5 C46 25 50 24.5 54 23" stroke="#fff" stroke-width="2.6" fill="none"/>
<path d="M14 17 C20 9.5 32 10 41 17" stroke="#fff" stroke-width="1.4" fill="none"/>
<path d="M21 25.5 C28 31 38 32 50 24" stroke="#fff" stroke-width="1.4" fill="none"/>
</g>
<circle cx="41" cy="16.8" r="1.3" fill="#fff"/>
<circle cx="21" cy="25.4" r="1.3" fill="#fff"/>
<text x="4.6" y="54.6" font-family="Liberation Sans" font-size="16.4" fill="#1c1c1c" stroke="#1c1c1c" stroke-width="0.55" letter-spacing="1.1" textLength="51.8" lengthAdjust="spacingAndGlyphs">iHESS</text>
</g></svg>
</div><div class="lab" style="width:105.6px"><svg class="mic" width="16" height="15" viewBox="0 0 16 15"><g fill="#ea5752"><path d="M7.7 2.8 C9.2 2.8 9.9 3.8 9.9 5 L9.9 7.3 C9.9 8.6 8.9 9.3 7.7 9.3 C6.5 9.3 5.5 8.6 5.5 7.3 L5.5 5 C5.5 3.8 6.2 2.8 7.7 2.8Z"/><rect x="7.1" y="9" width="1.2" height="2"/><rect x="5.9" y="10.6" width="4" height="1.5" rx="0.6"/></g><path d="M3.2 11.5 L12.6 2.7" stroke="#ea5752" stroke-width="1.25" stroke-linecap="round"/></svg><span class="lt" style="transform:scaleX(0.927)">iHESS - Artsani Anka</span></div></div>
<div class="tile" style="left:273px;top:243px"><div class="cn"><span>Joelson Simbolon</span></div><div class="lab" style="width:95.3px"><svg class="mic" width="16" height="15" viewBox="0 0 16 15"><g fill="#ea5752"><path d="M7.7 2.8 C9.2 2.8 9.9 3.8 9.9 5 L9.9 7.3 C9.9 8.6 8.9 9.3 7.7 9.3 C6.5 9.3 5.5 8.6 5.5 7.3 L5.5 5 C5.5 3.8 6.2 2.8 7.7 2.8Z"/><rect x="7.1" y="9" width="1.2" height="2"/><rect x="5.9" y="10.6" width="4" height="1.5" rx="0.6"/></g><path d="M3.2 11.5 L12.6 2.7" stroke="#ea5752" stroke-width="1.25" stroke-linecap="round"/></svg><span class="lt" style="transform:scaleX(0.972)">Joelson Simbolon</span></div></div>
<div class="tile" style="left:433px;top:243px"><div class="cn"><span>Hengki</span></div><div class="lab" style="width:49.2px"><svg class="mic" width="16" height="15" viewBox="0 0 16 15"><g fill="#ea5752"><path d="M7.7 2.8 C9.2 2.8 9.9 3.8 9.9 5 L9.9 7.3 C9.9 8.6 8.9 9.3 7.7 9.3 C6.5 9.3 5.5 8.6 5.5 7.3 L5.5 5 C5.5 3.8 6.2 2.8 7.7 2.8Z"/><rect x="7.1" y="9" width="1.2" height="2"/><rect x="5.9" y="10.6" width="4" height="1.5" rx="0.6"/></g><path d="M3.2 11.5 L12.6 2.7" stroke="#ea5752" stroke-width="1.25" stroke-linecap="round"/></svg><span class="lt" style="transform:scaleX(0.987)">Hengki</span></div></div>
<div class="tile" style="left:594px;top:243px"><div class="sq bsq" style="left:48px"><span>B</span></div><div class="lab" style="width:105.2px"><svg class="mic" width="16" height="15" viewBox="0 0 16 15"><g fill="#ea5752"><path d="M7.7 2.8 C9.2 2.8 9.9 3.8 9.9 5 L9.9 7.3 C9.9 8.6 8.9 9.3 7.7 9.3 C6.5 9.3 5.5 8.6 5.5 7.3 L5.5 5 C5.5 3.8 6.2 2.8 7.7 2.8Z"/><rect x="7.1" y="9" width="1.2" height="2"/><rect x="5.9" y="10.6" width="4" height="1.5" rx="0.6"/></g><path d="M3.2 11.5 L12.6 2.7" stroke="#ea5752" stroke-width="1.25" stroke-linecap="round"/></svg><span class="lt" style="transform:scaleX(0.963)">Bregas Wiratsongko</span></div></div>
<div class="tile" style="left:754px;top:243px"><div class="cn"><span>Nanda</span></div><div class="lab" style="width:46.8px"><svg class="mic" width="16" height="15" viewBox="0 0 16 15"><g fill="#ea5752"><path d="M7.7 2.8 C9.2 2.8 9.9 3.8 9.9 5 L9.9 7.3 C9.9 8.6 8.9 9.3 7.7 9.3 C6.5 9.3 5.5 8.6 5.5 7.3 L5.5 5 C5.5 3.8 6.2 2.8 7.7 2.8Z"/><rect x="7.1" y="9" width="1.2" height="2"/><rect x="5.9" y="10.6" width="4" height="1.5" rx="0.6"/></g><path d="M3.2 11.5 L12.6 2.7" stroke="#ea5752" stroke-width="1.25" stroke-linecap="round"/></svg><span class="lt" style="transform:scaleX(0.959)">Nanda</span></div></div>
<div class="tile" style="left:113px;top:335px"><div class="cn"><span>K_Tono - WIS JKT</span></div><div class="lab" style="width:92.5px"><svg class="mic" width="16" height="15" viewBox="0 0 16 15"><g fill="#ea5752"><path d="M7.7 2.8 C9.2 2.8 9.9 3.8 9.9 5 L9.9 7.3 C9.9 8.6 8.9 9.3 7.7 9.3 C6.5 9.3 5.5 8.6 5.5 7.3 L5.5 5 C5.5 3.8 6.2 2.8 7.7 2.8Z"/><rect x="7.1" y="9" width="1.2" height="2"/><rect x="5.9" y="10.6" width="4" height="1.5" rx="0.6"/></g><path d="M3.2 11.5 L12.6 2.7" stroke="#ea5752" stroke-width="1.25" stroke-linecap="round"/></svg><span class="lt" style="transform:scaleX(0.899)">K_Tono - WIS JKT</span></div></div>
<div class="tile" style="left:273px;top:335px"><div class="cn"><span>Agus</span></div><div class="lab" style="width:40.0px"><svg class="mic" width="16" height="15" viewBox="0 0 16 15"><g fill="#ea5752"><path d="M7.7 2.8 C9.2 2.8 9.9 3.8 9.9 5 L9.9 7.3 C9.9 8.6 8.9 9.3 7.7 9.3 C6.5 9.3 5.5 8.6 5.5 7.3 L5.5 5 C5.5 3.8 6.2 2.8 7.7 2.8Z"/><rect x="7.1" y="9" width="1.2" height="2"/><rect x="5.9" y="10.6" width="4" height="1.5" rx="0.6"/></g><path d="M3.2 11.5 L12.6 2.7" stroke="#ea5752" stroke-width="1.25" stroke-linecap="round"/></svg><span class="lt" style="transform:scaleX(0.945)">Agus</span></div></div>
<div class="tile" style="left:433px;top:335px"><div class="cn"><span>Wisel - Lorencius</span></div><div class="lab" style="width:92.2px"><svg class="mic" width="16" height="15" viewBox="0 0 16 15"><g fill="#ea5752"><path d="M7.7 2.8 C9.2 2.8 9.9 3.8 9.9 5 L9.9 7.3 C9.9 8.6 8.9 9.3 7.7 9.3 C6.5 9.3 5.5 8.6 5.5 7.3 L5.5 5 C5.5 3.8 6.2 2.8 7.7 2.8Z"/><rect x="7.1" y="9" width="1.2" height="2"/><rect x="5.9" y="10.6" width="4" height="1.5" rx="0.6"/></g><path d="M3.2 11.5 L12.6 2.7" stroke="#ea5752" stroke-width="1.25" stroke-linecap="round"/></svg><span class="lt" style="transform:scaleX(0.961)">Wisel - Lorencius</span></div></div>
<div class="tile" style="left:594px;top:335px"><div class="cn"><span>Ina Dwianto</span></div><div class="lab" style="width:70.2px"><svg class="mic" width="16" height="15" viewBox="0 0 16 15"><g fill="#ea5752"><path d="M7.7 2.8 C9.2 2.8 9.9 3.8 9.9 5 L9.9 7.3 C9.9 8.6 8.9 9.3 7.7 9.3 C6.5 9.3 5.5 8.6 5.5 7.3 L5.5 5 C5.5 3.8 6.2 2.8 7.7 2.8Z"/><rect x="7.1" y="9" width="1.2" height="2"/><rect x="5.9" y="10.6" width="4" height="1.5" rx="0.6"/></g><path d="M3.2 11.5 L12.6 2.7" stroke="#ea5752" stroke-width="1.25" stroke-linecap="round"/></svg><span class="lt" style="transform:scaleX(0.980)">Ina Dwianto</span></div></div>
<div class="tile" style="left:754px;top:335px"><div class="cn"><span>PARTCOUNTERS...</span></div><div class="lab" style="width:97.6px"><svg class="mic" width="16" height="15" viewBox="0 0 16 15"><g fill="#ea5752"><path d="M7.7 2.8 C9.2 2.8 9.9 3.8 9.9 5 L9.9 7.3 C9.9 8.6 8.9 9.3 7.7 9.3 C6.5 9.3 5.5 8.6 5.5 7.3 L5.5 5 C5.5 3.8 6.2 2.8 7.7 2.8Z"/><rect x="7.1" y="9" width="1.2" height="2"/><rect x="5.9" y="10.6" width="4" height="1.5" rx="0.6"/></g><path d="M3.2 11.5 L12.6 2.7" stroke="#ea5752" stroke-width="1.25" stroke-linecap="round"/></svg><span class="lt" style="transform:scaleX(0.831)">PARTCOUNTERSBY</span></div></div>
<div class="tile" style="left:113px;top:427px"><div class="cn"><span>Jamil&nbsp; nasrudien...</span></div><div class="lab" style="width:107.5px"><svg class="mic" width="16" height="15" viewBox="0 0 16 15"><g fill="#ea5752"><path d="M7.7 2.8 C9.2 2.8 9.9 3.8 9.9 5 L9.9 7.3 C9.9 8.6 8.9 9.3 7.7 9.3 C6.5 9.3 5.5 8.6 5.5 7.3 L5.5 5 C5.5 3.8 6.2 2.8 7.7 2.8Z"/><rect x="7.1" y="9" width="1.2" height="2"/><rect x="5.9" y="10.6" width="4" height="1.5" rx="0.6"/></g><path d="M3.2 11.5 L12.6 2.7" stroke="#ea5752" stroke-width="1.25" stroke-linecap="round"/></svg><span class="lt" style="transform:scaleX(0.976)">Jamil nasrudien findi</span></div></div>
<div class="tile" style="left:273px;top:427px"><div class="cn"><span>Restu R</span></div><div class="lab" style="width:50.8px"><svg class="mic" width="16" height="15" viewBox="0 0 16 15"><g fill="#ea5752"><path d="M7.7 2.8 C9.2 2.8 9.9 3.8 9.9 5 L9.9 7.3 C9.9 8.6 8.9 9.3 7.7 9.3 C6.5 9.3 5.5 8.6 5.5 7.3 L5.5 5 C5.5 3.8 6.2 2.8 7.7 2.8Z"/><rect x="7.1" y="9" width="1.2" height="2"/><rect x="5.9" y="10.6" width="4" height="1.5" rx="0.6"/></g><path d="M3.2 11.5 L12.6 2.7" stroke="#ea5752" stroke-width="1.25" stroke-linecap="round"/></svg><span class="lt" style="transform:scaleX(0.893)">Restu R</span></div></div>
<div class="tile" style="left:433px;top:427px"><div class="cn"><span>Rizki Nurhidayat</span></div><div class="lab" style="width:88.8px"><svg class="mic" width="16" height="15" viewBox="0 0 16 15"><g fill="#ea5752"><path d="M7.7 2.8 C9.2 2.8 9.9 3.8 9.9 5 L9.9 7.3 C9.9 8.6 8.9 9.3 7.7 9.3 C6.5 9.3 5.5 8.6 5.5 7.3 L5.5 5 C5.5 3.8 6.2 2.8 7.7 2.8Z"/><rect x="7.1" y="9" width="1.2" height="2"/><rect x="5.9" y="10.6" width="4" height="1.5" rx="0.6"/></g><path d="M3.2 11.5 L12.6 2.7" stroke="#ea5752" stroke-width="1.25" stroke-linecap="round"/></svg><span class="lt" style="transform:scaleX(0.965)">Rizki Nurhidayat</span></div></div>
<div class="tile" style="left:594px;top:427px"><div class="cn"><span>Seprian</span></div><div class="lab" style="width:50.8px"><svg class="mic" width="16" height="15" viewBox="0 0 16 15"><g fill="#ea5752"><path d="M7.7 2.8 C9.2 2.8 9.9 3.8 9.9 5 L9.9 7.3 C9.9 8.6 8.9 9.3 7.7 9.3 C6.5 9.3 5.5 8.6 5.5 7.3 L5.5 5 C5.5 3.8 6.2 2.8 7.7 2.8Z"/><rect x="7.1" y="9" width="1.2" height="2"/><rect x="5.9" y="10.6" width="4" height="1.5" rx="0.6"/></g><path d="M3.2 11.5 L12.6 2.7" stroke="#ea5752" stroke-width="1.25" stroke-linecap="round"/></svg><span class="lt" style="transform:scaleX(0.937)">Seprian</span></div></div>
<div class="tile" style="left:754px;top:427px"><div class="cn"><span><b style="font-weight:bold;display:inline-block;transform:scaleX(1.06)">M72ZAPRIL2015</b></span></div><div class="lab" style="width:87.1px"><svg class="mic" width="16" height="15" viewBox="0 0 16 15"><g fill="#ea5752"><path d="M7.7 2.8 C9.2 2.8 9.9 3.8 9.9 5 L9.9 7.3 C9.9 8.6 8.9 9.3 7.7 9.3 C6.5 9.3 5.5 8.6 5.5 7.3 L5.5 5 C5.5 3.8 6.2 2.8 7.7 2.8Z"/><rect x="7.1" y="9" width="1.2" height="2"/><rect x="5.9" y="10.6" width="4" height="1.5" rx="0.6"/></g><path d="M3.2 11.5 L12.6 2.7" stroke="#ea5752" stroke-width="1.25" stroke-linecap="round"/></svg><span class="lt" style="transform:scaleX(0.894)">M72ZAPRIL2015</span></div></div>

<!-- bottom toolbar -->
<svg class="abs" style="left:25px;top:538px" width="20" height="20" viewBox="0 0 20 20"><rect x="6.1" y="1.5" width="6.4" height="10.5" rx="3.2" fill="#a8a8a8"/><path d="M4 8.5 C4 12 6 14 9.3 14 C12.6 14 14.6 12 14.6 8.5" stroke="#a8a8a8" stroke-width="1.3" fill="none"/><path d="M9.3 14 V17.2M6.5 17.7 H12.2" stroke="#a8a8a8" stroke-width="1.4"/><path d="M0.7 18.6 L18.1 1.4" stroke="#1a1a1a" stroke-width="3.2"/><path d="M0.7 18.6 L18.1 1.4" stroke="#e05050" stroke-width="1.6"/></svg>
<svg class="abs" style="left:55px;top:545px" width="7" height="6" viewBox="0 0 7 6"><path d="M0.9 4.8 L3.5 2 L6.1 4.8" stroke="#bbb" stroke-width="1.1" fill="none"/></svg>
<div class="tb" style="left:18px;top:559px">Unmute</div>

<svg class="abs" style="left:94px;top:538px" width="20" height="20" viewBox="0 0 20 20"><rect x="1.1" y="4.9" width="12.7" height="10.1" rx="2" fill="#b0b0b0"/><path d="M14.6 8.2 L18.9 5.4 L18.9 14.6 L14.6 11.8Z" fill="#b0b0b0"/><path d="M1.4 18.6 L18.6 1.6" stroke="#1a1a1a" stroke-width="3.2"/><path d="M1.4 18.6 L18.6 1.6" stroke="#e05050" stroke-width="1.6"/></svg>
<svg class="abs" style="left:128px;top:545px" width="7" height="6" viewBox="0 0 7 6"><path d="M0.9 4.8 L3.5 2 L6.1 4.8" stroke="#bbb" stroke-width="1.1" fill="none"/></svg>
<div class="tb" style="left:81px;top:559px">Start Video</div>

<svg class="abs" style="left:341px;top:540px" width="16" height="16" viewBox="0 0 16 16"><path d="M8 0.5 L15 3 L15 7.5 C15 11.5 11.5 14.5 8 15.5 C4.5 14.5 1 11.5 1 7.5 L1 3Z" fill="#a8a8a8"/><path d="M8 2.2 L8 8 L13.3 8 C13.1 11 10.8 13.2 8 13.9 L8 8 L2.7 8 L2.7 4.2Z" fill="#1a1a1a"/></svg>
<div class="tb" style="left:332px;top:559px">Security</div>

<svg class="abs" style="left:418px;top:541px" width="20" height="15" viewBox="0 0 20 15"><circle cx="13.6" cy="4.8" r="2.8" fill="#a8a8a8"/><rect x="10" y="9.4" width="8.4" height="4.6" rx="2.3" fill="#a8a8a8"/><circle cx="6" cy="3.8" r="3.4" fill="#a8a8a8" stroke="#1a1a1a" stroke-width="0.8"/><rect x="0.6" y="8.3" width="11.4" height="5.8" rx="2.9" fill="#a8a8a8" stroke="#1a1a1a" stroke-width="0.9"/></svg>
<div class="tb" style="left:440px;top:540px;font-size:9px">28</div>
<svg class="abs" style="left:464px;top:545px" width="7" height="6" viewBox="0 0 7 6"><path d="M0.9 4.8 L3.5 2 L6.1 4.8" stroke="#bbb" stroke-width="1.1" fill="none"/></svg>
<div class="tb" style="left:405px;top:559px">Participants</div>

<svg class="abs" style="left:498px;top:541px" width="17" height="15" viewBox="0 0 17 15"><rect x="0.5" y="0.5" width="16" height="10.5" rx="2.5" fill="#a8a8a8"/><path d="M3.5 10 L3.5 14.5 L8 10Z" fill="#a8a8a8"/></svg>
<div class="tb" style="left:497px;top:559px">Chat</div>

<div class="abs" style="left:564px;top:541px;width:18px;height:14px;background:#22c55a;border-radius:2px"></div>
<svg class="abs" style="left:568px;top:543px" width="10" height="10" viewBox="0 0 10 10"><path d="M5 1 L8.5 4.5 H6.2 V8.5 H3.8 V4.5 H1.5Z" fill="#111"/></svg>
<svg class="abs" style="left:598px;top:545px" width="7" height="6" viewBox="0 0 7 6"><path d="M0.9 4.8 L3.5 2 L6.1 4.8" stroke="#bbb" stroke-width="1.1" fill="none"/></svg>
<div class="tb" style="left:547px;top:559px;color:#23c55a;transform-origin:left center;transform:scaleX(0.94)">Share Screen</div>

<div class="abs" style="left:643px;top:539px;width:15px;height:15px;background:#a8a8a8;border-radius:2px"></div>
<svg class="abs" style="left:647px;top:543px" width="8" height="8" viewBox="0 0 8 8"><path d="M1 0.5 L7 4 L1 7.5Z" fill="#1a1a1a"/></svg>
<div class="abs" style="left:662px;top:539px;width:15px;height:15px;background:#a8a8a8;border-radius:2px"></div>
<div class="abs" style="left:666px;top:543px;width:7px;height:7px;background:#1a1a1a"></div>
<div class="tb" style="left:611px;top:560px">Resume/Stop Recording</div>

<svg class="abs" style="left:732px;top:538px" width="18" height="18" viewBox="0 0 18 18"><circle cx="8" cy="10" r="7.5" fill="#a8a8a8"/><circle cx="5.5" cy="8.5" r="1" fill="#1a1a1a"/><circle cx="10.5" cy="8.5" r="1" fill="#1a1a1a"/><path d="M4.5 11 C5.5 13.5 10.5 13.5 11.5 11" stroke="#1a1a1a" stroke-width="1.2" fill="none"/><path d="M14.5 0.5V5.5M12 3H17" stroke="#a8a8a8" stroke-width="1.4"/></svg>
<div class="tb" style="left:720px;top:559px">Reactions</div>

<div class="abs" style="left:968px;top:545px;width:46px;height:20px;background:#bb2727;border-radius:5px;text-align:center;line-height:20px;font-size:9.6px;font-weight:bold;color:#fff"><span style="display:inline-block;transform:scaleX(0.85)">End</span></div>
</body></html>
